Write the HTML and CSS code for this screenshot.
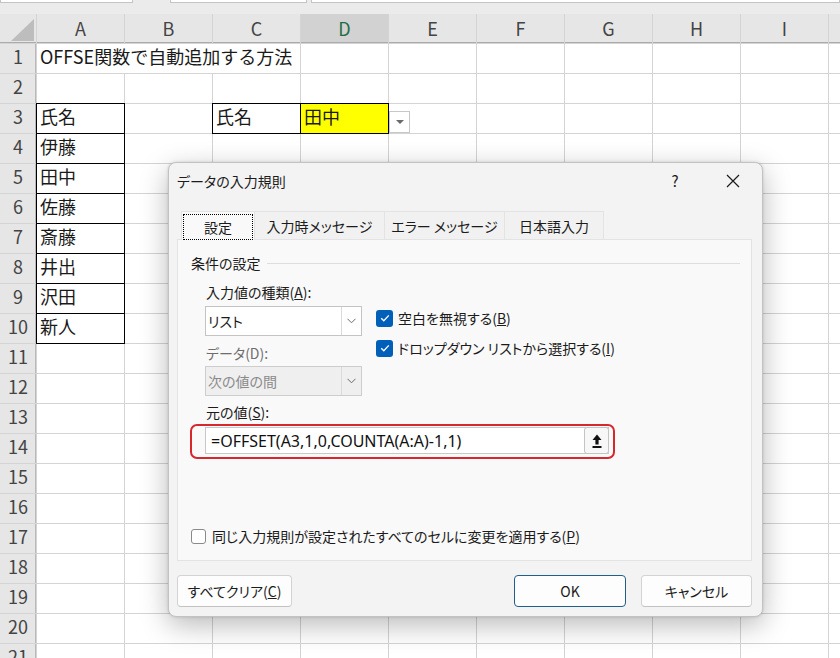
FILE: index.html
```html
<!DOCTYPE html>
<html lang="ja">
<head>
<meta charset="utf-8">
<title>データの入力規則</title>
<link rel="stylesheet" href="styles.css">
</head>
<body>
<div class="sheet">
  <div class="topbar">
    <div class="fbox name"></div>
    <div class="fbox mid"></div>
    <div class="fbox formula"></div>
  </div>
  <div class="grid">
    <div class="corner"><div class="tri"></div></div>
    <div class="ch">A</div><div class="ch">B</div><div class="ch">C</div><div class="ch sel">D</div><div class="ch">E</div><div class="ch">F</div><div class="ch">G</div><div class="ch">H</div><div class="ch">I</div><div class="ch"></div>

    <div class="rh">1</div><div class="c span3">OFFSE関数で自動追加する方法</div><div class="c"></div><div class="c"></div><div class="c"></div><div class="c"></div><div class="c"></div><div class="c"></div><div class="c"></div>
    <div class="rh">2</div><div class="c"></div><div class="c"></div><div class="c"></div><div class="c"></div><div class="c"></div><div class="c"></div><div class="c"></div><div class="c"></div><div class="c"></div><div class="c"></div>
    <div class="rh">3</div><div class="c b">氏名</div><div class="c"></div><div class="c b">氏名</div><div class="c b y">田中</div><div class="c ddcell"><div class="dd"><span class="ddtri"></span></div></div><div class="c"></div><div class="c"></div><div class="c"></div><div class="c"></div><div class="c"></div>
    <div class="rh">4</div><div class="c b">伊藤</div><div class="c"></div><div class="c"></div><div class="c"></div><div class="c"></div><div class="c"></div><div class="c"></div><div class="c"></div><div class="c"></div><div class="c"></div>
    <div class="rh">5</div><div class="c b">田中</div><div class="c"></div><div class="c"></div><div class="c"></div><div class="c"></div><div class="c"></div><div class="c"></div><div class="c"></div><div class="c"></div><div class="c"></div>
    <div class="rh">6</div><div class="c b">佐藤</div><div class="c"></div><div class="c"></div><div class="c"></div><div class="c"></div><div class="c"></div><div class="c"></div><div class="c"></div><div class="c"></div><div class="c"></div>
    <div class="rh">7</div><div class="c b">斎藤</div><div class="c"></div><div class="c"></div><div class="c"></div><div class="c"></div><div class="c"></div><div class="c"></div><div class="c"></div><div class="c"></div><div class="c"></div>
    <div class="rh">8</div><div class="c b">井出</div><div class="c"></div><div class="c"></div><div class="c"></div><div class="c"></div><div class="c"></div><div class="c"></div><div class="c"></div><div class="c"></div><div class="c"></div>
    <div class="rh">9</div><div class="c b">沢田</div><div class="c"></div><div class="c"></div><div class="c"></div><div class="c"></div><div class="c"></div><div class="c"></div><div class="c"></div><div class="c"></div><div class="c"></div>
    <div class="rh">10</div><div class="c b">新人</div><div class="c"></div><div class="c"></div><div class="c"></div><div class="c"></div><div class="c"></div><div class="c"></div><div class="c"></div><div class="c"></div><div class="c"></div>
    <div class="rh">11</div><div class="c"></div><div class="c"></div><div class="c"></div><div class="c"></div><div class="c"></div><div class="c"></div><div class="c"></div><div class="c"></div><div class="c"></div><div class="c"></div>
    <div class="rh">12</div><div class="c"></div><div class="c"></div><div class="c"></div><div class="c"></div><div class="c"></div><div class="c"></div><div class="c"></div><div class="c"></div><div class="c"></div><div class="c"></div>
    <div class="rh">13</div><div class="c"></div><div class="c"></div><div class="c"></div><div class="c"></div><div class="c"></div><div class="c"></div><div class="c"></div><div class="c"></div><div class="c"></div><div class="c"></div>
    <div class="rh">14</div><div class="c"></div><div class="c"></div><div class="c"></div><div class="c"></div><div class="c"></div><div class="c"></div><div class="c"></div><div class="c"></div><div class="c"></div><div class="c"></div>
    <div class="rh">15</div><div class="c"></div><div class="c"></div><div class="c"></div><div class="c"></div><div class="c"></div><div class="c"></div><div class="c"></div><div class="c"></div><div class="c"></div><div class="c"></div>
    <div class="rh">16</div><div class="c"></div><div class="c"></div><div class="c"></div><div class="c"></div><div class="c"></div><div class="c"></div><div class="c"></div><div class="c"></div><div class="c"></div><div class="c"></div>
    <div class="rh">17</div><div class="c"></div><div class="c"></div><div class="c"></div><div class="c"></div><div class="c"></div><div class="c"></div><div class="c"></div><div class="c"></div><div class="c"></div><div class="c"></div>
    <div class="rh">18</div><div class="c"></div><div class="c"></div><div class="c"></div><div class="c"></div><div class="c"></div><div class="c"></div><div class="c"></div><div class="c"></div><div class="c"></div><div class="c"></div>
    <div class="rh">19</div><div class="c"></div><div class="c"></div><div class="c"></div><div class="c"></div><div class="c"></div><div class="c"></div><div class="c"></div><div class="c"></div><div class="c"></div><div class="c"></div>
    <div class="rh">20</div><div class="c"></div><div class="c"></div><div class="c"></div><div class="c"></div><div class="c"></div><div class="c"></div><div class="c"></div><div class="c"></div><div class="c"></div><div class="c"></div>
    <div class="rh">21</div><div class="c"></div><div class="c"></div><div class="c"></div><div class="c"></div><div class="c"></div><div class="c"></div><div class="c"></div><div class="c"></div><div class="c"></div><div class="c"></div>
  </div>
</div>

<div class="dialog">
  <div class="titlebar">
    <div class="title">データの入力規則</div>
    <div class="help">?</div>
    <div class="close">
      <svg width="14" height="14" viewBox="0 0 14 14"><path d="M1 1 L13 13 M13 1 L1 13" stroke="#1b1b1b" stroke-width="1.2" fill="none"/></svg>
    </div>
  </div>
  <div class="tabs">
    <div class="tab active w1"><span class="focus">設定</span></div>
    <div class="tab w2">入力時メッセージ</div>
    <div class="tab w3">エラー メッセージ</div>
    <div class="tab w4">日本語入力</div>
  </div>
  <div class="panel">
    <div class="group">
      <span class="glabel">条件の設定</span>
      <span class="gline"></span>
    </div>
    <div class="formrow">
      <div class="leftcol">
        <div class="lbl">入力値の種類(<u>A</u>):</div>
        <div class="select sel1">
          <span class="stext">リスト</span>
          <span class="sarrow"><svg width="9" height="6" viewBox="0 0 9 6"><path d="M0.5 0.8 L4.5 4.8 L8.5 0.8" stroke="#6a6a6a" stroke-width="1" fill="none"/></svg></span>
        </div>
        <div class="lbl dis lbl2">データ(D):</div>
        <div class="select disabled sel2">
          <span class="stext">次の値の間</span>
          <span class="sarrow"><svg width="9" height="6" viewBox="0 0 9 6"><path d="M0.5 0.8 L4.5 4.8 L8.5 0.8" stroke="#6a6a6a" stroke-width="1" fill="none"/></svg></span>
        </div>
      </div>
      <div class="rightcol">
        <div class="chk">
          <span class="box on"><svg width="16" height="16" viewBox="0 0 16 16"><path d="M4.2 8.3 L6.8 10.8 L11.8 5.4" stroke="#fff" stroke-width="1.3" fill="none"/></svg></span>
          <span>空白を無視する(<u>B</u>)</span>
        </div>
        <div class="chk">
          <span class="box on"><svg width="16" height="16" viewBox="0 0 16 16"><path d="M4.2 8.3 L6.8 10.8 L11.8 5.4" stroke="#fff" stroke-width="1.3" fill="none"/></svg></span>
          <span>ドロップダウン リストから選択する(<u>I</u>)</span>
        </div>
      </div>
    </div>
    <div class="lbl lbl3">元の値(<u>S</u>):</div>
    <div class="redbox">
      <div class="input">
        <span class="itext">=OFFSET(A3,1,0,COUNTA(A:A)-1,1)</span>
        <span class="upbtn"><svg width="10" height="14" viewBox="0 0 10 14"><path d="M5 0.5 L9.5 6 H6.6 V10.5 H3.4 V6 H0.5 Z" fill="#111"/><rect x="0.5" y="12" width="9" height="2" fill="#111"/></svg></span>
      </div>
    </div>
    <div class="chk bottomchk">
      <span class="box off"></span>
      <span>同じ入力規則が設定されたすべてのセルに変更を適用する(<u>P</u>)</span>
    </div>
  </div>
  <div class="buttons">
    <div class="btn clear">すべてクリア(<u>C</u>)</div>
    <div class="btn ok">OK</div>
    <div class="btn cancel">キャンセル</div>
  </div>
</div>
</body>
</html>
```
FILE: styles.css
```css
* { box-sizing: border-box; }
html, body { margin: 0; padding: 0; }
body {
  width: 840px;
  height: 658px;
  overflow: hidden;
  position: relative;
  background: #fff;
  font-family: "Noto Sans CJK JP", "Noto Sans", sans-serif;
}

/* ---------- spreadsheet ---------- */
.topbar {
  height: 14px;
  background: #ebebeb;
  display: flex;
  align-items: flex-start;
}
.fbox {
  height: 3px;
  background: #fff;
  border: 1px solid #c4c4c4;
  border-top: 0;
}
.fbox.name { width: 133px; }
.fbox.mid { width: 137px; margin-left: 37px; }
.fbox.formula { flex: 1; margin-left: 4px; }

.grid {
  display: grid;
  grid-template-columns: 36px repeat(10, 87px);
  grid-auto-rows: 29px;
  gap: 1px;
  background: #d4d4d4;
}
.corner {
  background: #e6e6e6;
  display: flex;
  align-items: flex-end;
  justify-content: flex-end;
  padding: 0 2px 2px 0;
  box-shadow: inset 0 -1px 0 #ababab;
}
.tri {
  width: 23px;
  height: 22px;
  background: #bdbdbd;
  clip-path: polygon(100% 0, 100% 100%, 0 100%);
}
.ch {
  background: #e6e6e6;
  display: flex;
  align-items: center;
  justify-content: center;
  font-size: 18px;
  color: #444;
  padding-bottom: 2px;
  box-shadow: inset 0 -1px 0 #ababab;
}
.ch.sel { background: #d2d2d2; color: #1f6e43; }
.rh {
  background: #e6e6e6;
  display: flex;
  align-items: center;
  justify-content: center;
  font-size: 18px;
  color: #444;
  padding-bottom: 5px;
  box-shadow: inset -1px 0 0 #b8b8b8;
}
.c {
  background: #fff;
  display: flex;
  align-items: center;
  padding-left: 3px;
  padding-bottom: 5px;
  font-size: 18px;
  color: #1a1a1a;
  white-space: nowrap;
}
.c.span3 { grid-column: span 3; }
.c.b { outline: 1px solid #000; }
.c.y { background: #ffff00; }
.c.ddcell { align-items: flex-end; padding-left: 0; padding-bottom: 0; }
.dd {
  width: 21px;
  height: 22px;
  border: 1px solid #c8c8c8;
  background: #fff;
  display: flex;
  align-items: center;
  justify-content: center;
}
.ddtri {
  width: 0;
  height: 0;
  border-left: 4px solid transparent;
  border-right: 4px solid transparent;
  border-top: 4px solid #6a6a6a;
}

/* ---------- dialog ---------- */
.dialog {
  position: absolute;
  left: 168px;
  top: 162px;
  width: 595px;
  height: 455px;
  background: #f3f3f3;
  border: 1px solid #c2c2c2;
  border-radius: 8px;
  box-shadow: 0 8px 28px rgba(0, 0, 0, 0.28), 0 0 3px rgba(0, 0, 0, 0.15);
  font-family: "Noto Sans CJK JP", "Noto Sans", sans-serif;
  font-feature-settings: "palt";
  font-size: 14px;
  color: #1b1b1b;
  display: flex;
  flex-direction: column;
}
.titlebar {
  height: 48px;
  display: flex;
  align-items: flex-start;
  padding: 8px 6px 0 8px;
}
.title { flex: 1; line-height: 20px; }
.help {
  width: 40px;
  text-align: center;
  line-height: 20px;
  font-size: 15px;
}
.close {
  width: 46px;
  height: 20px;
  margin-left: 15px;
  display: flex;
  align-items: center;
  justify-content: center;
}

.tabs {
  display: flex;
  margin-left: 12px;
  height: 28px;
}
.tab {
  height: 28px;
  display: flex;
  align-items: center;
  justify-content: center;
  background: #f1f1f1;
  border: 1px solid #e3e3e3;
  border-bottom: 0;
  margin-right: -1px;
  white-space: nowrap;
}
.tab.active {
  background: #f9f9f9;
  padding: 2px 1px 0 1px;
  align-items: stretch;
  position: relative;
  z-index: 1;
  height: 29px;
  margin-bottom: -1px;
}
.tab.active .focus {
  flex: 1;
  border: 1px dotted #000;
  display: flex;
  align-items: center;
  justify-content: center;
}
.w1 { width: 74px; }
.w2 { width: 131px; }
.w3 { width: 121px; }
.w4 { width: 100px; }

.panel {
  margin-left: 8px;
  width: 575px;
  height: 322px;
  background: #f9f9f9;
  border: 1px solid #e3e3e3;
  display: flex;
  flex-direction: column;
  align-items: flex-start;
}
.group {
  margin-top: 13px;
  margin-left: 13px;
  width: 549px;
  height: 20px;
  display: flex;
  align-items: center;
}
.glabel { line-height: 20px; }
.gline {
  flex: 1;
  height: 1px;
  background: #dedede;
  margin-left: 6px;
}
.formrow {
  margin-top: 9px;
  display: flex;
}
.leftcol {
  margin-left: 27px;
  width: 157px;
  display: flex;
  flex-direction: column;
}
.lbl { line-height: 20px; height: 20px; padding-left: 1px; white-space: nowrap; }
.lbl.dis { color: #6e6e6e; }
.lbl2 { margin-top: 7px; }
.select {
  height: 30px;
  background: #fff;
  border: 1px solid #c4c4c4;
  display: flex;
  align-items: stretch;
}
.sel1 { margin-top: 4px; }
.sel2 { margin-top: 3px; }
.select.disabled { background: #efefef; border-color: #cdcdcd; color: #8a8a8a; }
.stext {
  flex: 1;
  display: flex;
  align-items: center;
  padding-left: 2px;
}
.sarrow {
  width: 20px;
  border-left: 1px solid #dadada;
  display: flex;
  align-items: center;
  justify-content: center;
}
.rightcol {
  margin-left: 14px;
  padding-top: 26px;
  display: flex;
  flex-direction: column;
  gap: 10px;
}
.chk {
  display: flex;
  align-items: center;
  height: 20px;
  white-space: nowrap;
}
.box {
  width: 17px;
  height: 17px;
  border-radius: 3px;
  margin-right: 5px;
  display: flex;
  align-items: center;
  justify-content: center;
}
.box.on { background: #005fb8; }
.box.off {
  width: 15px;
  height: 15px;
  background: #fff;
  border: 1px solid #8a8a8a;
  margin-right: 6px;
}
.lbl3 { margin-top: 6px; margin-left: 28px; padding-left: 0; }
.redbox {
  margin-top: 2px;
  margin-left: 12px;
  width: 425px;
  height: 35px;
  border: 2px solid #d8262d;
  border-radius: 7px;
  padding: 1px 4px 0 13px;
}
.input {
  height: 27px;
  background: #fff;
  border: 1px solid #c8c8c8;
  display: flex;
  align-items: stretch;
}
.itext {
  flex: 1;
  display: flex;
  align-items: center;
  padding-left: 5px;
  font-family: "Noto Sans", "Open Sans", sans-serif;
  font-size: 16px;
  color: #111;
}
.upbtn {
  width: 25px;
  margin: -1px -1px 0 0;
  height: 27px;
  background: #f7f7f7;
  border: 1px solid #c4c4c4;
  border-radius: 3px;
  display: flex;
  align-items: center;
  justify-content: center;
}
.bottomchk { margin-top: 67px; margin-left: 13px; }

.buttons {
  display: flex;
  margin: 14px 10px 0 8px;
}
.btn {
  height: 32px;
  background: #fdfdfd;
  border: 1px solid #d3d3d3;
  border-bottom-color: #c2c2c2;
  border-radius: 4px;
  display: flex;
  align-items: center;
  justify-content: center;
  white-space: nowrap;
}
.btn.clear { width: 115px; }
.btn.ok { width: 112px; margin-left: auto; border-color: #1f5f8b; }
.btn.cancel { width: 111px; margin-left: 15px; }
```
